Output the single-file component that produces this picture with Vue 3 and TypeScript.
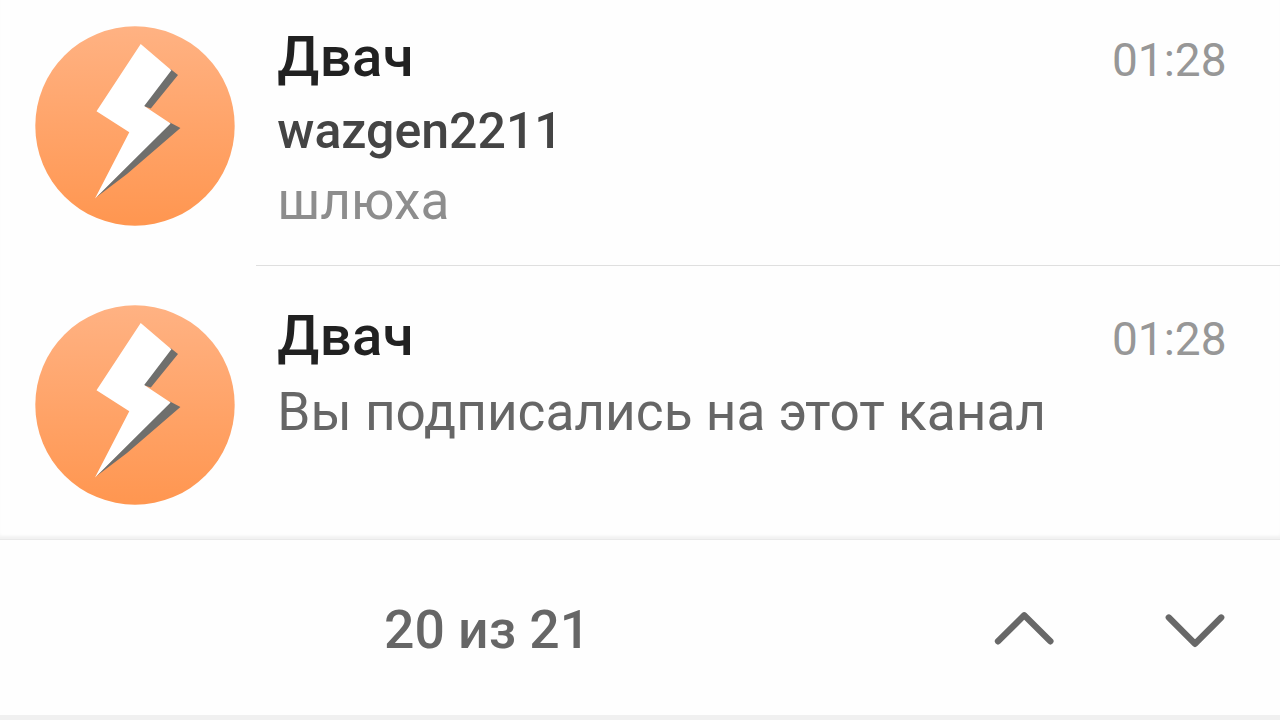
<script setup lang="ts">
interface Chat {
  id: number
  title: string
  time: string
  sender?: string
  text: string
}

const chats: Chat[] = [
  { id: 1, title: 'Двач', time: '01:28', sender: 'wazgen2211', text: 'шлюха' },
  { id: 2, title: 'Двач', time: '01:28', text: 'Вы подписались на этот канал' },
]
</script>

<template>
  <main class="screen">
    <section class="list">
      <article v-for="chat in chats" :key="chat.id" class="chat" :class="{ plain: !chat.sender }">
        <svg class="avatar" viewBox="0 0 200 200">
          <defs>
            <linearGradient :id="`sky-${chat.id}`" x1="0" y1="0" x2="0" y2="1">
              <stop offset="0" stop-color="#ffb283" />
              <stop offset="1" stop-color="#ff9650" />
            </linearGradient>
          </defs>
          <circle cx="100" cy="100" r="99.7" :fill="`url(#sky-${chat.id})`" />
          <path d="M135.5 43 143 49 115.8 82.4 108 80ZM135 96.5 145.4 102 92 148 61 171.5Z" fill="#6f6f6d" />
          <path d="M105.7 18 136.4 44.2 109.2 80 135.6 97.4 60 172.5 94.3 106.3 61.5 85.2Z" fill="#fff" />
        </svg>
        <div class="body">
          <header class="head">
            <h2 class="title">{{ chat.title }}</h2>
            <time class="time">{{ chat.time }}</time>
          </header>
          <p v-if="chat.sender" class="sender">{{ chat.sender }}</p>
          <p class="text">{{ chat.text }}</p>
        </div>
      </article>
    </section>
    <footer class="bar">
      <span class="count">20 из 21</span>
      <nav class="arrows">
        <svg class="arrow" viewBox="0 0 64 40"><path d="M6 32.3 32.2 6.3 58.4 32.3" /></svg>
        <svg class="arrow" viewBox="0 0 64 40"><path d="M5.8 8.5 32 34.8 58.2 8.5" /></svg>
      </nav>
    </footer>
  </main>
</template>

<style>
body {
  margin: 0;
  background: #fefefe;
}
</style>

<style scoped>
.screen {
  box-sizing: border-box;
  width: 1280px;
  height: 720px;
  display: flex;
  flex-direction: column;
  overflow: hidden;
  background: #fefefe;
  border-bottom: 5px solid #f0f0f0;
  font-family: Roboto, "Noto Sans", sans-serif;
}
.list {
  height: 540px;
  flex: none;
  box-sizing: border-box;
  border-bottom: 1px solid #e9e9e9;
  box-shadow: inset 0 -4px 3px -1px #f2f2f2;
}
.chat {
  display: flex;
  height: 266px;
}
.chat.plain {
  padding-top: 13px;
  height: 260px;
}
.avatar {
  width: 200px;
  height: 200px;
  margin: 26px 21px 0 35px;
  flex: none;
}
.body {
  flex: 1;
  box-sizing: border-box;
  padding: 24px 53.5px 0 21.3px;
  border-bottom: 1px solid #dfdfdf;
}
.plain .body {
  border-bottom: 0;
}
.head {
  display: flex;
  justify-content: space-between;
  align-items: baseline;
  height: 66px;
}
.title,
.sender,
.text {
  margin: 0;
  white-space: nowrap;
}
.title {
  font-size: 56.2px;
  line-height: 66px;
  font-weight: 500;
  letter-spacing: 0.4px;
  color: #212121;
}
.time {
  font-size: 46px;
  line-height: 60px;
  color: #979797;
}
.sender {
  margin-top: 6px;
  font-size: 50px;
  line-height: 70px;
  font-weight: 500;
  color: #444;
}
.text {
  font-size: 53.2px;
  line-height: 70px;
  color: #8d8d8d;
}
.plain .text {
  margin-top: 8px;
  color: #666;
}
.bar {
  flex: 1;
  display: flex;
  align-items: center;
  justify-content: space-between;
  padding: 3px 53px 0 384px;
}
.count {
  padding-top: 2px;
  font-size: 53.5px;
  line-height: 62px;
  font-weight: 500;
  color: #666;
}
.arrows {
  display: flex;
  gap: 107px;
}
.arrow {
  width: 64px;
  height: 40px;
  fill: none;
  stroke: #686868;
  stroke-width: 6.3;
  stroke-linecap: round;
  stroke-linejoin: round;
}
</style>
